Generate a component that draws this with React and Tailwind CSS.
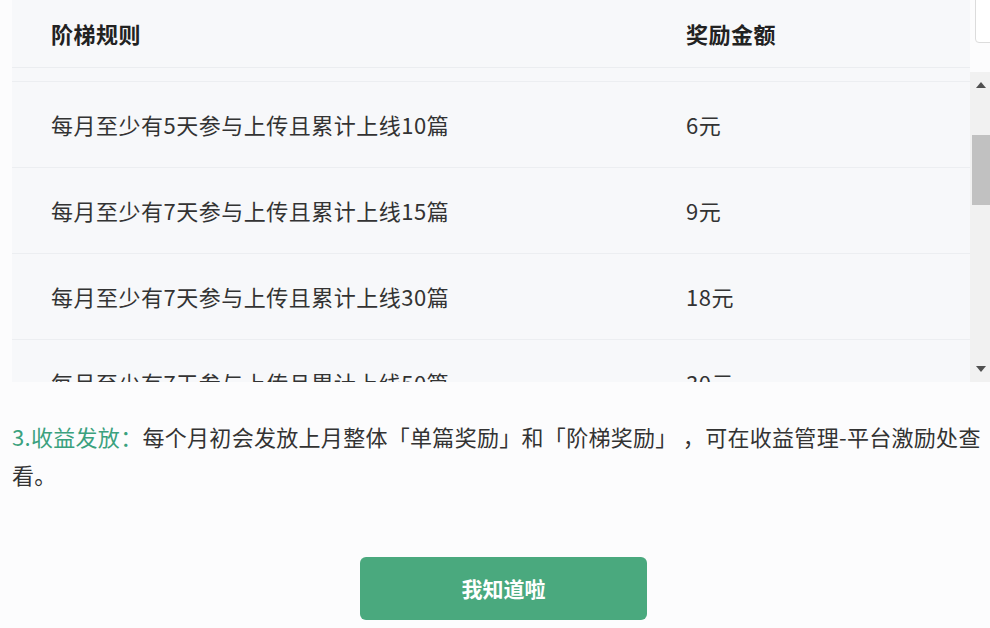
import React from 'react';

const rows = [
  { rule: '每月至少有5天参与上传且累计上线10篇', amount: '6元' },
  { rule: '每月至少有7天参与上传且累计上线15篇', amount: '9元' },
  { rule: '每月至少有7天参与上传且累计上线30篇', amount: '18元' },
  { rule: '每月至少有7天参与上传且累计上线50篇', amount: '30元' },
];

const font = { fontFamily: '"Noto Sans CJK SC", "Noto Sans", sans-serif' };

const App = () => {
  return (
    <div
      className="relative h-[628px] w-[990px] overflow-hidden bg-[#fcfcfd] text-[#333]"
      style={font}
    >
      {/* table */}
      <div className="flex h-[382px]">
        <div className="ml-[12px] flex w-[958px] flex-col bg-[#f7f8fa]">
          <div className="flex h-[68px] shrink-0 items-center border-b border-[#ebedf0] text-[22px] font-bold tracking-[0.5px] text-[#222]">
            <div className="w-[674px] pl-[39px]">阶梯规则</div>
            <div>奖励金额</div>
          </div>
          <div className="h-[14px] shrink-0 border-b border-[#eceef1]" />
          <div className="flex-1 overflow-hidden">
            {rows.map((r) => (
              <div
                key={r.rule}
                className="flex h-[86px] items-center border-b border-[#eceef1] text-[22px] tracking-[0.5px] text-[#333]"
              >
                <div className="w-[674px] pl-[39px]">{r.rule}</div>
                <div>{r.amount}</div>
              </div>
            ))}
          </div>
        </div>
        {/* scrollbar */}
        <div className="mt-[72px] flex w-[20px] flex-col bg-[#f1f1f1] pl-[2px]">
          <div className="flex h-[26px] items-center justify-center">
            <svg width="10" height="6" viewBox="0 0 10 6">
              <path d="M5 0L10 6H0Z" fill="#505050" />
            </svg>
          </div>
          <div className="mt-[37px] h-[70px] bg-[#c1c1c1]" />
          <div className="flex-1" />
          <div className="flex h-[26px] items-center justify-center">
            <svg width="10" height="6" viewBox="0 0 10 6">
              <path d="M0 0H10L5 6Z" fill="#505050" />
            </svg>
          </div>
        </div>
      </div>

      {/* corner box overlay */}
      <div className="absolute right-[-6px] top-[-4px] h-[47px] w-[21px] rounded-[4px] border border-[#dcdcdc] bg-white" />

      {/* note */}
      <div className="mt-[35px] pl-[12px] text-[22px] leading-[38px] tracking-[0.3px] text-[#333]">
        <span className="text-[#3aa17e]">3.收益发放：</span>
        每个月初会发放上月整体「单篇奖励」和「阶梯奖励」 ，可在收益管理-平台激励处查看。
      </div>

      {/* button */}
      <div className="mt-[64px] flex justify-center pl-[17px]">
        <button className="h-[63px] w-[287px] rounded-[6px] bg-[#4aa97e] text-[21px] font-bold text-white">
          我知道啦
        </button>
      </div>
    </div>
  );
};

export default App;
